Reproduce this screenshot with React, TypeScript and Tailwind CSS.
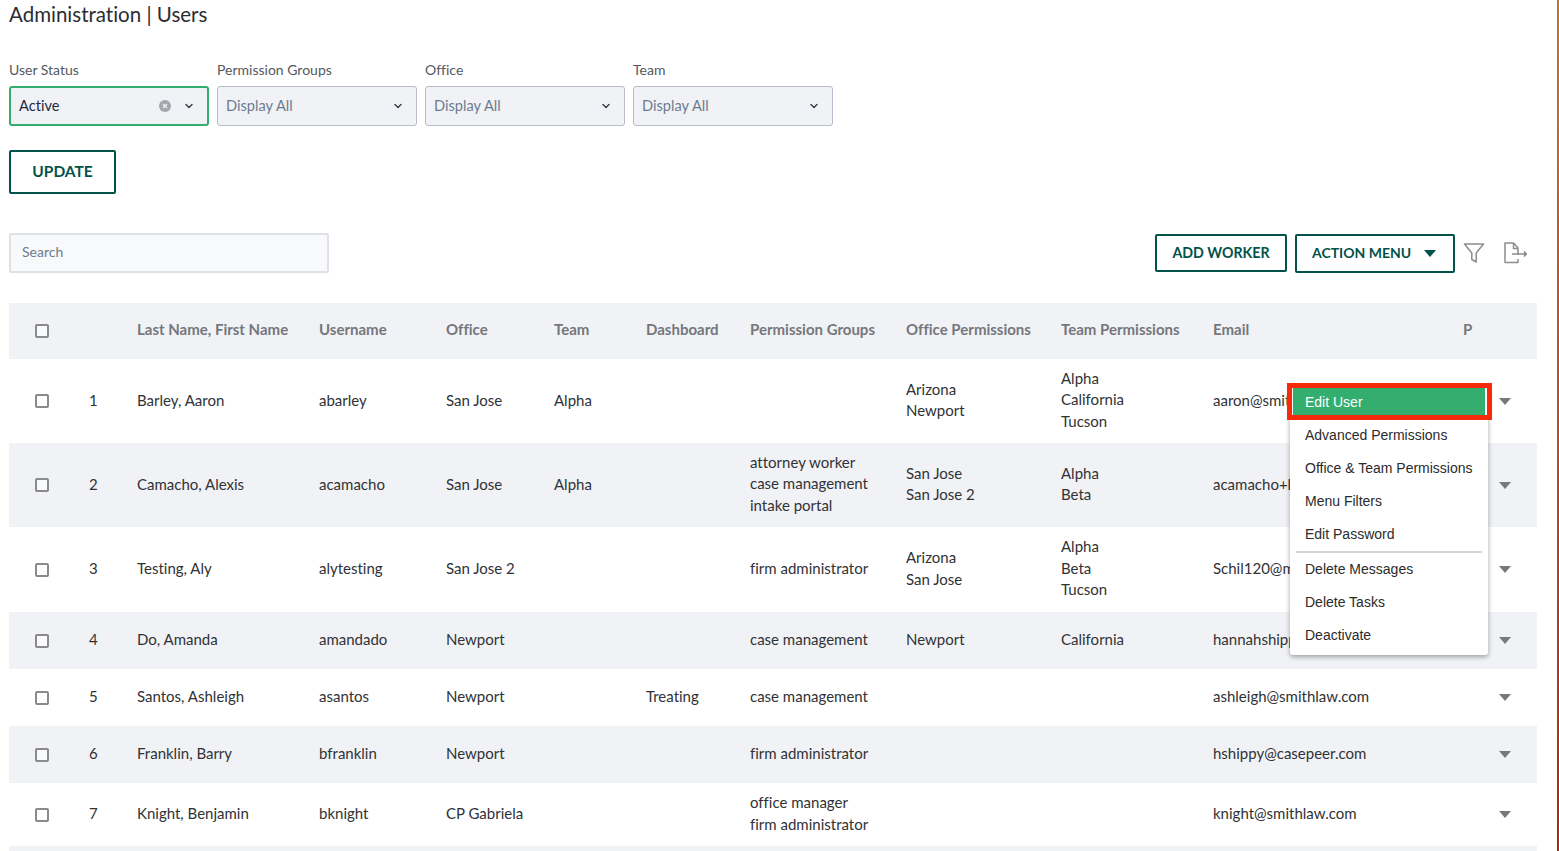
import { ChevronDown } from "lucide-react"

const rows = [
  { h: "h-[84px]", n: 1, name: "Barley, Aaron", user: "abarley", office: "San Jose", team: "Alpha", dash: "", perm: [], oPerm: ["Arizona", "Newport"], tPerm: ["Alpha", "California", "Tucson"], email: "aaron@smithlaw.com" },
  { h: "h-[84px]", n: 2, name: "Camacho, Alexis", user: "acamacho", office: "San Jose", team: "Alpha", dash: "", perm: ["attorney worker", "case management", "intake portal"], oPerm: ["San Jose", "San Jose 2"], tPerm: ["Alpha", "Beta"], email: "acamacho+l@smithlaw.com" },
  { h: "h-[85px]", n: 3, name: "Testing, Aly", user: "alytesting", office: "San Jose 2", team: "", dash: "", perm: ["firm administrator"], oPerm: ["Arizona", "San Jose"], tPerm: ["Alpha", "Beta", "Tucson"], email: "Schil120@msn.com" },
  { h: "h-[57px]", n: 4, name: "Do, Amanda", user: "amandado", office: "Newport", team: "", dash: "", perm: ["case management"], oPerm: ["Newport"], tPerm: ["California"], email: "hannahshippy@casepeer.com" },
  { h: "h-[57px]", n: 5, name: "Santos, Ashleigh", user: "asantos", office: "Newport", team: "", dash: "Treating", perm: ["case management"], oPerm: [], tPerm: [], email: "ashleigh@smithlaw.com" },
  { h: "h-[57px]", n: 6, name: "Franklin, Barry", user: "bfranklin", office: "Newport", team: "", dash: "", perm: ["firm administrator"], oPerm: [], tPerm: [], email: "hshippy@casepeer.com" },
  { h: "h-[63px]", n: 7, name: "Knight, Benjamin", user: "bknight", office: "CP Gabriela", team: "", dash: "", perm: ["office manager", "firm administrator"], oPerm: [], tPerm: [], email: "knight@smithlaw.com" },
]

const headers = ["Last Name, First Name", "Username", "Office", "Team", "Dashboard", "Permission Groups", "Office Permissions", "Team Permissions", "Email", "P"]

const filters = [
  { label: "User Status", value: "Active" },
  { label: "Permission Groups", value: "Display All" },
  { label: "Office", value: "Display All" },
  { label: "Team", value: "Display All" },
]

const Check = () => <div className="w-[14px] h-[14px] border-2 border-[#8a8a8a] rounded-[2px] bg-white/60 mx-auto" />

const Caret = ({ cls }: { cls: string }) => (
  <svg viewBox="0 0 12 7" className={cls}><path d="M0 0h12L6 7z" fill="currentColor" /></svg>
)

const Lines = ({ items }: { items: string[] }) => (
  <>
    {items.map((t) => (
      <div key={t} className="leading-[21.5px]">{t}</div>
    ))}
  </>
)

const App = () => {
  return (
    <div className="relative flex h-screen overflow-hidden bg-white font-['Lato',sans-serif] text-[15px] text-[#303236] [font-variant-ligatures:none]">
      <div className="flex-1 min-w-0 pl-[9px] pr-[20px]">
        <h1 className="text-[20.5px] leading-[28px] text-[#2b2d33]">Administration | Users</h1>

        <div className="flex gap-2 mt-[33px]">
          {filters.map((f, i) => (
            <div key={f.label} className="w-[200px]">
              <div className="text-[14px] leading-[18px] text-[#55585e] mb-[7px]">{f.label}</div>
              <div className={i === 0
                ? "flex items-center h-10 bg-[#f1f2f6] border-2 border-[#34ae6f] rounded-[3px] pl-2 pr-[12px] text-[14.6px] text-[#1c2a3f]"
                : "flex items-center h-10 bg-[#f1f2f6] border border-[#b8bccd] rounded-[3px] pl-2 pr-[12px] text-[14.6px] text-[#6f7a8f]"}>
                <span className="flex-1 pb-[1px]">{f.value}</span>
                {i === 0 && (
                  <svg viewBox="0 0 12 12" className="w-3 h-3 mr-3 text-[#a3a6ae]">
                    <circle cx="6" cy="6" r="6" fill="currentColor" />
                    <path d="M4 4l4 4M8 4l-4 4" stroke="#f1f2f6" strokeWidth="1.4" />
                  </svg>
                )}
                <ChevronDown size={12} strokeWidth={3} className="text-[#3b4252]" />
              </div>
            </div>
          ))}
        </div>

        <button className="block mt-6 w-[107px] h-11 border-2 border-[#03524a] rounded-[2px] font-bold text-[#03524a] text-[15.5px]">UPDATE</button>

        <div className="flex items-center justify-between mt-[39px] h-[40px]">
          <div className="flex items-center w-[320px] h-[40px] pb-[4px] bg-[#f8f9fb] border-2 border-[#dfe1e7] rounded-[2px] px-[11px] text-[14px] text-[#6f7a8f]">Search</div>
          <div className="flex items-center">
            <button className="w-[132px] h-[38px] border-2 border-[#03524a] rounded-[2px] font-bold text-[#03524a] text-[14.2px]">ADD WORKER</button>
            <button className="flex items-center pl-[15px] ml-2 w-[160px] h-[39px] border-2 border-[#03524a] rounded-[2px] font-bold text-[#03524a] text-[14px]">
              <span className="pb-[2px]">ACTION MENU</span>
              <Caret cls="w-3 h-[7px] ml-[13px] text-[#03524a]" />
            </button>
            <svg viewBox="0 0 22 22" className="w-[22px] h-[22px] ml-[8px] text-[#8a8d91]" fill="none" stroke="currentColor" strokeWidth="1.5" strokeLinejoin="round">
              <path d="M1.5 2h19l-7.3 9v9l-4.4-2.5V11z" />
            </svg>
            <svg viewBox="0 0 24 22" className="w-[24px] h-[22px] ml-[18px] mr-[10px] text-[#8a8d91]" fill="none" stroke="currentColor" strokeWidth="1.5" strokeLinejoin="round">
              <path d="M15 13V6l-4.5-5H2v19.5h13V17M10.5 1v5.5H15" />
              <path d="M9 12h14" />
              <path d="M21 9.5l2.5 2.5-2.5 2.5" fill="currentColor" />
            </svg>
          </div>
        </div>

        <table className="table-fixed w-[1528px] mt-[30px] border-collapse">
          <colgroup>
            <col className="w-[66px]" />
            <col className="w-[62px]" />
            <col className="w-[182px]" />
            <col className="w-[127px]" />
            <col className="w-[108px]" />
            <col className="w-[92px]" />
            <col className="w-[104px]" />
            <col className="w-[156px]" />
            <col className="w-[155px]" />
            <col className="w-[152px]" />
            <col className="w-[250px]" />
            <col className="w-[36px]" />
            <col className="w-[38px]" />
          </colgroup>
          <thead>
            <tr className="h-[56px] bg-[#f1f2f6] text-left">
              <th><Check /></th>
              <th />
              {headers.map((h) => (
                <th key={h} className="pb-[3px] font-bold text-[15px] text-[#75777c] whitespace-nowrap">{h}</th>
              ))}
              <th />
            </tr>
          </thead>
          <tbody>
            {rows.map((r) => (
              <tr key={r.n} className={`${r.h} ${r.n % 2 === 0 ? "bg-[#f1f2f6]" : "bg-white"}`}>
                <td><Check /></td>
                <td className="pl-[14px] pb-[2px]">{r.n}</td>
                <td className="pb-[2px]">{r.name}</td>
                <td className="pb-[2px]">{r.user}</td>
                <td className="pb-[2px]">{r.office}</td>
                <td className="pb-[2px]">{r.team}</td>
                <td className="pb-[2px]">{r.dash}</td>
                <td className="pb-[2px]"><Lines items={r.perm} /></td>
                <td className="pb-[2px]"><Lines items={r.oPerm} /></td>
                <td className="pb-[2px]"><Lines items={r.tPerm} /></td>
                <td colSpan={2} className="pb-[2px] whitespace-nowrap">{r.email}</td>
                <td><Caret cls="w-3 h-[7px] text-[#77797d]" /></td>
              </tr>
            ))}
            <tr className="h-[57px] bg-[#f1f2f6]"><td colSpan={13} /></tr>
          </tbody>
        </table>
      </div>
      <div className="w-[2px] shrink-0 bg-linear-to-b from-[#cc6f1f] to-[#a92a17]" />

      {/* row action dropdown */}
      <div className="absolute left-[1290px] top-[386px] w-[198px] h-[269px] bg-white rounded-[3px] shadow-[0_2px_5px_rgba(0,0,0,0.35)] font-['Liberation_Sans',sans-serif] text-[14px] text-[#2b2b2b]">
        <div className="h-[27px] mx-[3px] mt-[2px] bg-[#34ae6f] text-white pl-[12px] leading-[28px]">Edit User</div>
        <div className="pt-[4px]">
          {["Advanced Permissions", "Office & Team Permissions", "Menu Filters", "Edit Password"].map((t) => (
            <div key={t} className="h-[33px] pl-[15px] leading-[33px]">{t}</div>
          ))}
        </div>
        <div className="mx-[6px] h-[2px] bg-[#d4d4d4]" />
        {["Delete Messages", "Delete Tasks", "Deactivate"].map((t) => (
          <div key={t} className="h-[33px] pl-[15px] leading-[33px]">{t}</div>
        ))}
      </div>
      <div className="absolute left-[1287px] top-[383px] w-[205px] h-[37px] border-[5px] border-[#f52a0a] pointer-events-none" />
    </div>
  )
}

export default App
